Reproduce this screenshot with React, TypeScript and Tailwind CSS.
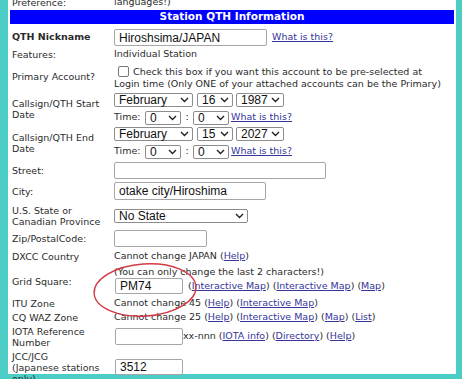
import React from 'react';

const link = "text-[#35359a] underline";

function Chevron() {
  return (
    <svg width="9" height="6" viewBox="0 0 9 6" className="shrink-0">
      <path d="M1 1l3.5 3.5L8 1" fill="none" stroke="#222" strokeWidth="1.4" />
    </svg>
  );
}

function Select({ value, w }: { value: string; w: string }) {
  return (
    <div
      className={`${w} h-[14px] shrink-0 border border-[#8d8d8d] rounded-[2px] bg-white flex items-center justify-between pl-[4px] pr-[3px] font-['Liberation_Sans',Arial,sans-serif] text-[12px] leading-none text-[#111]`}
    >
      <span>{value}</span>
      <Chevron />
    </div>
  );
}

function Field({ value = "", w, h = "h-[17px]" }: { value?: string; w: string; h?: string }) {
  return (
    <input
      readOnly
      value={value}
      className={`${w} ${h} shrink-0 border border-[#a6a6a6] rounded-[2px] bg-white px-[4px] font-['Liberation_Sans',Arial,sans-serif] text-[12px] text-[#111] outline-none`}
    />
  );
}

function Row({
  label,
  h,
  children,
  bold,
  valueClass = "items-center",
}: {
  label: React.ReactNode;
  h: string;
  children?: React.ReactNode;
  bold?: boolean;
  valueClass?: string;
}) {
  return (
    <div className={`flex ${h}`}>
      <div className={`w-[104px] shrink-0 pl-[2px] flex items-center leading-[11px] ${bold ? "font-bold" : ""}`}>
        <span>{label}</span>
      </div>
      <div className={`flex-1 flex ${valueClass}`}>{children}</div>
    </div>
  );
}

function DateBlock({ month, day, year }: { month: string; day: string; year: string }) {
  return (
    <div className="flex flex-col gap-[3px]">
      <div className="flex items-center">
        <Select value={month} w="w-[79px]" />
        <div className="ml-[4px]"><Select value={day} w="w-[36px]" /></div>
        <div className="ml-[3px]"><Select value={year} w="w-[48px]" /></div>
      </div>
      <div className="flex items-center">
        <span className="w-[31px]">Time:</span>
        <Select value="0" w="w-[36px]" />
        <span className="w-[12px] text-center">:</span>
        <Select value="0" w="w-[36px]" />
        <a className={`${link} ml-[2px]`}>What is this?</a>
      </div>
    </div>
  );
}

export default function App() {
  return (
    <div className="relative h-[379px] w-[462px] overflow-hidden bg-[#4bcdc6]">
      <div className="ml-[8px] w-[448px] h-full bg-white px-[2px] text-[9.5px] text-[#2b2b2b] font-['DejaVu_Sans',Verdana,sans-serif]">
        <div className="-mt-[5px]">
          <Row label="Preference:" h="h-[15px]">
            <span>languages!)</span>
          </Row>
        </div>

        <div className="h-[14px] bg-[#0000fe] text-white font-bold text-[10.5px] flex items-center justify-center">
          Station QTH Information
        </div>

        <Row label="QTH Nickname" bold h="h-[24px]" valueClass="items-center pt-[3px]">
          <Field value="Hiroshsima/JAPAN" w="w-[153px]" />
          <a className={`${link} ml-[5px]`}>What is this?</a>
        </Row>

        <Row label="Features:" h="h-[12px]">
          <span>Individual Station</span>
        </Row>

        <Row label="Primary Account?" h="h-[32px]" valueClass="items-center pt-[4px]">
          <div className="leading-[12px] whitespace-nowrap">
            <span className="inline-block align-[-2px] w-[11px] h-[11px] border border-[#777] rounded-[2px] ml-[4px] mr-[4px]" />
            Check this box if you want this account to be pre-selected at
            <br />
            Login time (Only ONE of your attached accounts can be the Primary)
          </div>
        </Row>

        <Row label={<>Callsign/QTH Start<br />Date</>} h="h-[34px]">
          <DateBlock month="February" day="16" year="1987" />
        </Row>

        <Row label={<>Callsign/QTH End<br />Date</>} h="h-[34px]">
          <DateBlock month="February" day="15" year="2027" />
        </Row>

        <Row label="Street:" h="h-[21px]">
          <Field w="w-[212px]" />
        </Row>

        <Row label="City:" h="h-[20px]">
          <Field value="otake city/Hiroshima" w="w-[152px]" h="h-[18px]" />
        </Row>

        <Row label={<>U.S. State or<br />Canadian Province</>} h="h-[29px]">
          <Select value="No State" w="w-[134px]" />
        </Row>

        <Row label="Zip/PostalCode:" h="h-[17px]">
          <Field w="w-[93px]" />
        </Row>

        <Row label="DXCC Country" h="h-[19px]">
          <span>
            Cannot change JAPAN (<a className={link}>Help</a>)
          </span>
        </Row>

        <Row label="Grid Square:" h="h-[30px]" valueClass="flex-col justify-start">
          <span className="leading-[12px]">(You can only change the last 2 characters!)</span>
          <div className="flex items-center">
            <div className="ml-[1px]"><Field value="PM74" w="w-[68px]" h="h-[16px]" /></div>
            <span className="ml-[5px]">
              (<a className={link}>Interactive Map</a>) (<a className={link}>Interactive Map</a>) (<a className={link}>Map</a>)
            </span>
          </div>
        </Row>

        <Row label="ITU Zone" h="h-[14px]">
          <span>
            Cannot change 45 (<a className={link}>Help</a>) (<a className={link}>Interactive Map</a>)
          </span>
        </Row>

        <Row label="CQ WAZ Zone" h="h-[14px]">
          <span>
            Cannot change 25 (<a className={link}>Help</a>) (<a className={link}>Interactive Map</a>) (<a className={link}>Map</a>) (<a className={link}>List</a>)
          </span>
        </Row>

        <Row label={<>IOTA Reference<br />Number</>} h="h-[25px]">
          <div className="ml-[1px]"><Field w="w-[68px]" /></div>
          <span>
            xx-nnn (<a className={link}>IOTA info</a>) (<a className={link}>Directory</a>) (<a className={link}>Help</a>)
          </span>
        </Row>

        <Row label={<>JCC/JCG<br />(Japanese stations<br />only)</>} h="h-[36px]">
          <div className="ml-[1px]"><Field value="3512" w="w-[68px]" h="h-[16px]" /></div>
        </Row>
      </div>

      <svg className="absolute left-[91px] top-[261px] pointer-events-none" width="110" height="60" viewBox="0 0 110 60">
        <ellipse cx="54" cy="29" rx="51" ry="26" fill="none" stroke="#d23a44" strokeWidth="1.4" transform="rotate(-4 54 29)" />
      </svg>
    </div>
  );
}
